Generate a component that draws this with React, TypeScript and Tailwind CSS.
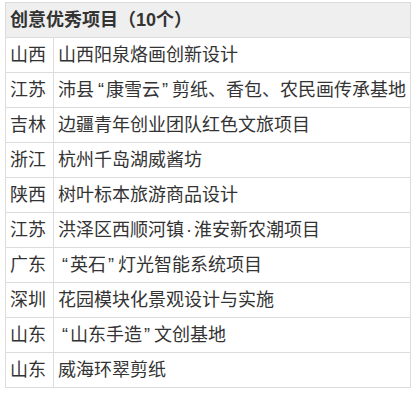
import React from "react";

const rows: [string, string][] = [
  ["山西", "山西阳泉烙画创新设计"],
  ["江苏", "沛县“康雪云”剪纸、香包、农民画传承基地"],
  ["吉林", "边疆青年创业团队红色文旅项目"],
  ["浙江", "杭州千岛湖威酱坊"],
  ["陕西", "树叶标本旅游商品设计"],
  ["江苏", "洪泽区西顺河镇·淮安新农潮项目"],
  ["广东", "“英石”灯光智能系统项目"],
  ["深圳", "花园模块化景观设计与实施"],
  ["山东", "“山东手造”文创基地"],
  ["山东", "威海环翠剪纸"],
];

function Text({ s }: { s: string }) {
  const parts = s.split(/([“”·])/);
  return (
    <>
      {parts.map((p, i) => {
        if (p === "“") return <span key={i} className="ml-[4px] mr-[2px]">“</span>;
        if (p === "”") return <span key={i} className="ml-[2px] mr-[4px]">”</span>;
        if (p === "·") return <span key={i} className="mx-[2px]">·</span>;
        return <span key={i}>{p}</span>;
      })}
    </>
  );
}

export default function App() {
  return (
    <div
      className="w-[416px] h-[394px] bg-white pl-[5px] pt-[2px] text-[#333333]"
      style={{ fontFamily: '"Liberation Sans", "Noto Sans CJK SC", sans-serif' }}
    >
      <div className="w-[406px] border-t border-l border-r border-[#dcdcdc]">
        <div className="flex h-[35px] items-center border-b border-[#dcdcdc] bg-[#efefef] pl-[4px] text-[18px] font-bold whitespace-nowrap">
          创意优秀项目（10个）
        </div>
        {rows.map(([a, b], i) => (
          <div key={i} className="flex h-[35px] border-b border-[#dcdcdc] text-[18px] whitespace-nowrap">
            <div className="flex w-[48px] items-center border-r border-[#dcdcdc] pl-[4px]">{a}</div>
            <div className="flex flex-1 items-center pl-[4px]">
              <span>
                <Text s={b} />
              </span>
            </div>
          </div>
        ))}
      </div>
    </div>
  );
}
